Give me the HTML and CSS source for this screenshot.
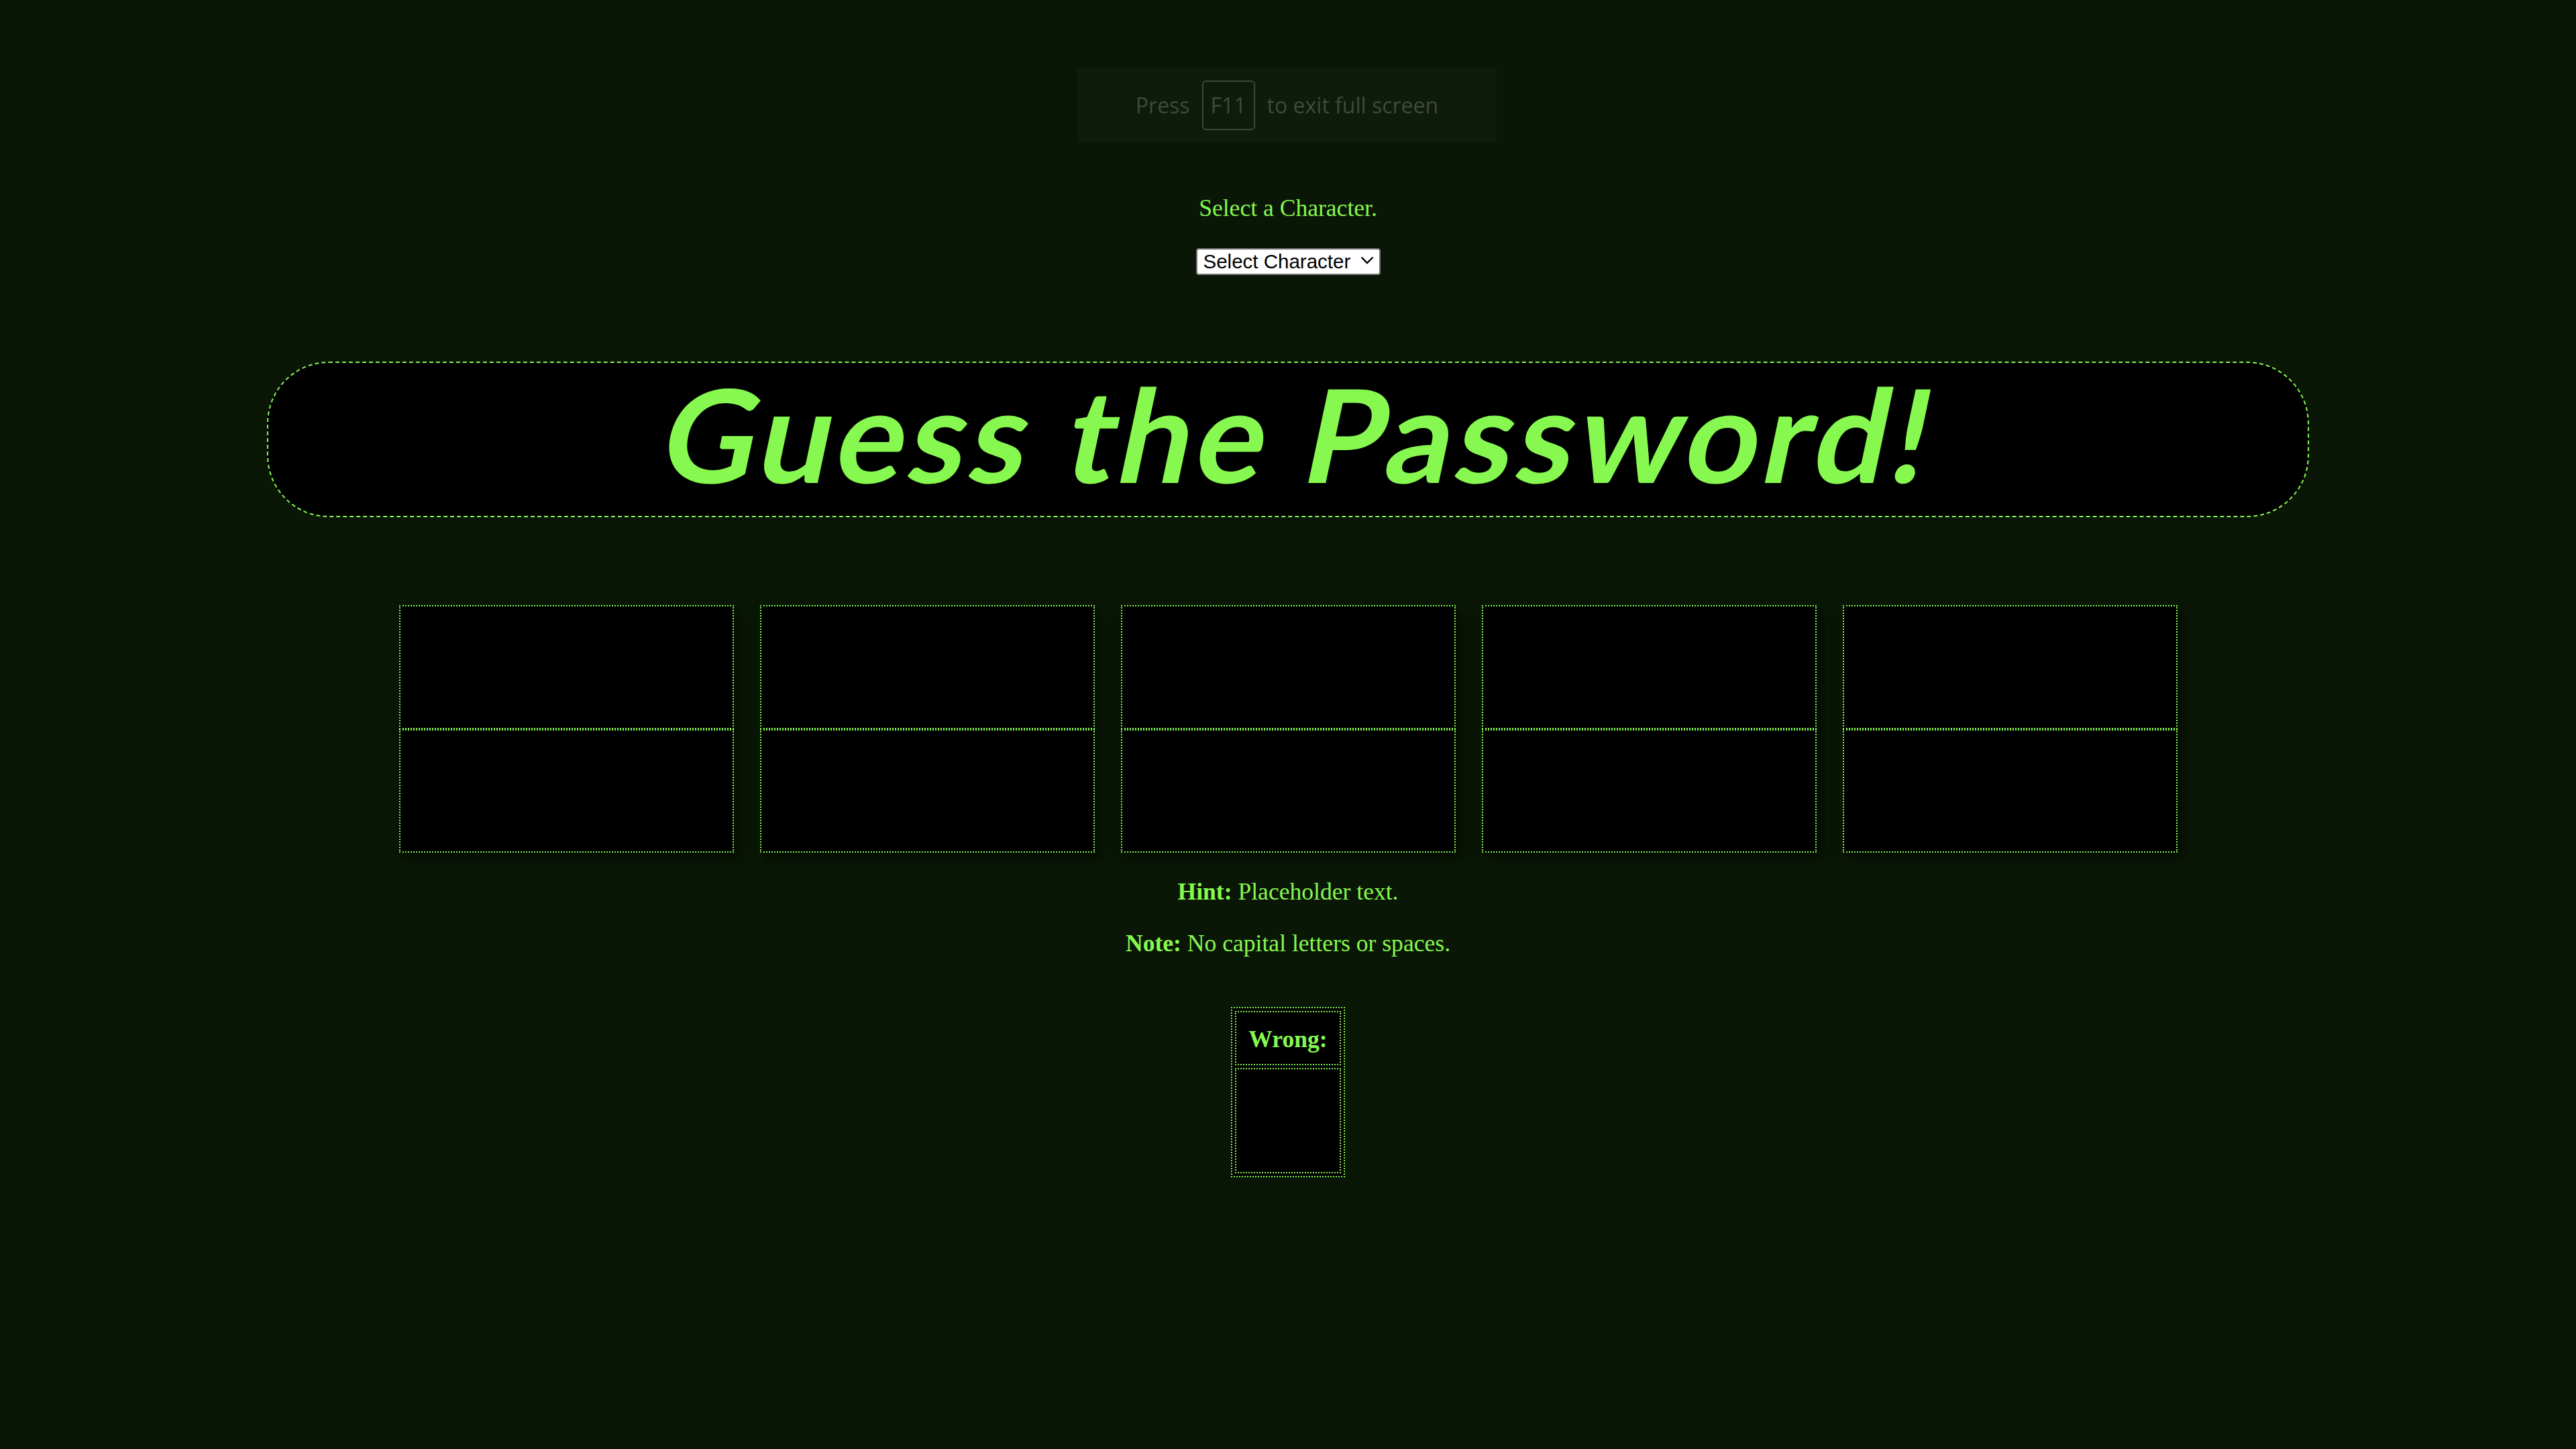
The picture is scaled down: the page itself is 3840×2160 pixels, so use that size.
FILE: index.html
```html
<!DOCTYPE html>
<html lang="en">
<head>
<meta charset="utf-8">
<title>Guess the Password!</title>
<link rel="stylesheet" href="styles.css">
</head>
<body>
<div class="fs-toast">
  <span class="fs-text">Press</span>
  <span class="fs-key">F11</span>
  <span class="fs-text">to exit full screen</span>
</div>

<main class="page">
  <p class="prompt">Select a Character.</p>
  <div class="select-row">
    <div class="select-wrap">
      <select class="char-select">
        <option>Select Character</option>
      </select>
      <svg class="chevron" viewBox="0 0 20 12" width="20" height="12" aria-hidden="true">
        <path d="M1.5 1.5 L10 10 L18.5 1.5" fill="none" stroke="#000" stroke-width="2.4"/>
      </svg>
    </div>
  </div>

  <h1 class="title"><span class="title-text">Guess the Password!</span></h1>

  <div class="slots">
    <div class="slot"><div class="cell"></div><div class="cell"></div></div>
    <div class="slot"><div class="cell"></div><div class="cell"></div></div>
    <div class="slot"><div class="cell"></div><div class="cell"></div></div>
    <div class="slot"><div class="cell"></div><div class="cell"></div></div>
    <div class="slot"><div class="cell"></div><div class="cell"></div></div>
  </div>

  <p class="hint"><b>Hint:</b> Placeholder text.</p>
  <p class="note"><b>Note:</b> No capital letters or spaces.</p>

  <table class="wrong">
    <tr><th class="wrong-head">Wrong:</th></tr>
    <tr><td class="wrong-body"></td></tr>
  </table>
</main>
</body>
</html>
```

FILE: styles.css
```css
html, body {
  margin: 0;
  padding: 0;
}

body {
  background: #0a1706;
  color: #86f84f;
  font-family: "Liberation Serif", "Times New Roman", serif;
  font-size: 35.6px;
  line-height: 40px;
  text-align: center;
  min-height: 2160px;
  position: relative;
}

/* full screen toast (overlay) */
.fs-toast {
  position: absolute;
  top: 102px;
  left: 1606px;
  width: 625px;
  height: 110px;
  background: #0f1b0c;
  display: flex;
  align-items: center;
  justify-content: center;
  gap: 18px;
  font-family: "Open Sans", "Noto Sans", sans-serif;
  font-size: 32px;
  color: #3d4c37;
}

.fs-key {
  display: flex;
  align-items: center;
  justify-content: center;
  width: 79px;
  height: 74px;
  box-sizing: border-box;
  border: 2px solid #3a4934;
  border-radius: 6px;
}

.page {
  padding: 290px 17.6px 0;
}

.prompt {
  margin: 0;
}

.select-row {
  margin-top: 38px;
  height: 40px;
  display: flex;
  justify-content: center;
}

.select-wrap {
  position: relative;
  width: 275px;
  height: 40px;
}

.char-select {
  appearance: none;
  -webkit-appearance: none;
  box-sizing: border-box;
  width: 275px;
  height: 40px;
  margin: 0;
  padding: 0 0 0 9px;
  border: 2px solid #767676;
  border-radius: 4px;
  background: #fff;
  color: #000;
  font-family: "Liberation Sans", Arial, sans-serif;
  font-size: 29.5px;
  line-height: 36px;
}

.chevron {
  position: absolute;
  right: 10px;
  top: 14px;
  pointer-events: none;
}

.title {
  box-sizing: border-box;
  width: 80%;
  height: 232px;
  margin: 131px auto 0;
  padding: 0 0 18px;
  border: 2px dashed #86f84f;
  border-radius: 92px;
  background: #000;
  font-family: "Lato", "Noto Sans", sans-serif;
  font-weight: 700;
  font-size: 193px;
  line-height: 210px;
  color: #86f84f;
}

.title-text {
  display: inline-block;
  transform: skewX(-12deg);
  transform-origin: 50% 180px;
  letter-spacing: 6px;
  margin-left: 6px;
}

.slots {
  margin-top: 131px;
  display: flex;
  justify-content: center;
  gap: 39px;
}

.slot {
  width: 499px;
  display: flex;
  flex-direction: column;
  box-shadow: 7px 9px 18px rgba(0, 0, 0, 0.55);
}

.cell {
  box-sizing: border-box;
  height: 184.5px;
  border: 2px dotted #86f84f;
  background: #000;
}

.hint {
  margin: 38px 0 0;
}

.note {
  margin: 37px 0 0;
}

.wrong {
  margin: 75px auto 0;
  border: 2px dotted #86f84f;
  border-spacing: 4px;
  background: #000;
}

.wrong-head,
.wrong-body {
  box-sizing: border-box;
  width: 158px;
  border: 2px dotted #86f84f;
  padding: 0;
}

.wrong-head {
  height: 81px;
  padding-top: 2px;
  font-weight: 700;
}

.wrong-body {
  height: 157px;
}
```
